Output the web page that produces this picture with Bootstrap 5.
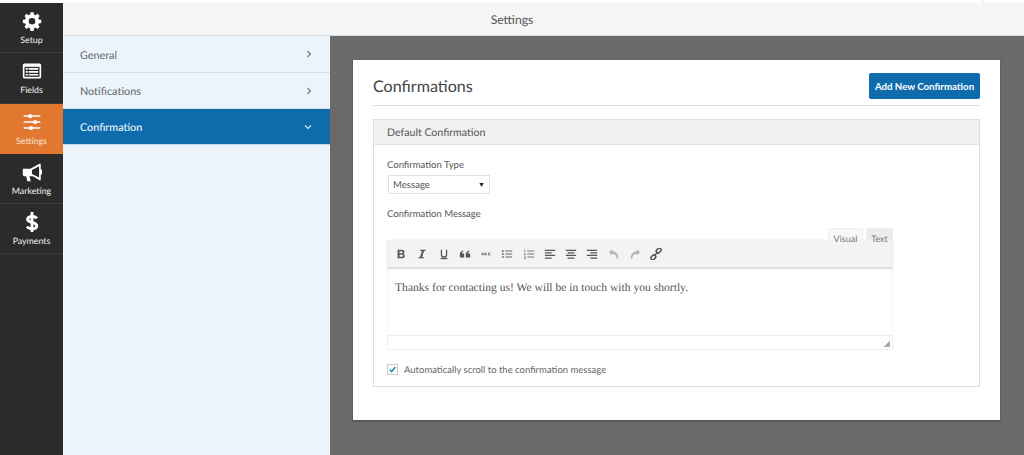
<!DOCTYPE html>
<html lang="en">
<head>
<meta charset="utf-8">
<title>Settings</title>
<link rel="stylesheet" href="https://cdn.jsdelivr.net/npm/bootstrap@5.3.0/dist/css/bootstrap.min.css">
<style>
html,body{height:455px;overflow:hidden;background:#fff;}
body{font-family:"Lato","Open Sans",sans-serif;color:#555;text-rendering:geometricPrecision;}
.strip{height:3px;background:#fff;display:flex;justify-content:flex-end;padding-right:41px;}
.strip-tick{width:1px;background:#ddd;}
.shell{height:452px;}
.rail{width:63px;background:#2b2b2b;flex:none;}
.rail-item{height:50.3px;color:#f2f2f2;font-size:8.800px;line-height:12px;border-bottom:1px solid #3a3a3a;padding-top:8px;}
.rail-item svg{display:block;margin-bottom:3px;height:20px;width:20px;}
.rail-on{background:#e27730;border-bottom-color:#e27730;}
.rail-on span{color:#fbe6d6;}
.topbar{height:33px;background:#f5f5f5;border-bottom:1px solid #ddd;font-size:12.200px;color:#555;padding:3px 63px 0 0;flex:none;}
.navcol{width:267px;background:#ebf3fb;flex:none;}
.navrow{height:36px;padding:0 18px 0 17px;font-size:10.800px;color:#666;border-bottom:1px solid #d5dfe8;}
.navrow span{padding-top:4px;}
.navrow:first-child{height:37px;}
.navrow:first-child span{padding-top:5px;}
.navrow-on{background:#0e6cad;color:#fff;border-bottom-color:#bcd5e8;}
.stage{background:#6a6a6a;padding:24px 24px 0 23px;min-width:0;}
.sheet{background:#fff;height:360px;padding:13px 20px 0;box-shadow:0 1px 2px rgba(0,0,0,.3);}
.sheet-head{height:33px;border-bottom:1px solid #ddd;}
.sheet-title{font-size:16.100px;font-weight:400;color:#444;margin:0;padding-top:1px;line-height:26px;}
.addbtn{background:#0e6cad;color:#fff;font-size:9.700px;font-weight:700;width:111px;height:26px;padding:0;border:0;border-radius:2px;}
.addbtn:hover{background:#0e6cad;color:#fff;}
.confbox{margin-top:13px;border:1px solid #ddd;height:268px;}
.confbox-head{height:25px;background:#f1f1f1;border-bottom:1px solid #e4e4e4;font-size:10.600px;line-height:27px;padding-left:13px;color:#555;}
.confbox-body{padding:12px 14px 0 13px;}
.fieldlabel{font-size:9.500px;height:14px;line-height:18px;color:#555;margin:0;display:block;}
.fieldlabel-gap{margin-top:12px;}
.typepick{width:102px;height:19px;margin:4px 0 0 1px;font-size:9.600px;line-height:19px;background:#fff;border:1px solid #e3e3e3;padding:1px 4px 0;color:#555;}
.typepick i{font-style:normal;font-size:7px;color:#222;}
.editor{width:506px;}
.tabsrow{height:12px;margin-top:8px;gap:3px;position:relative;z-index:1;}
.edtab{font-size:9px;line-height:19px;height:12px;color:#777;text-align:center;background:#f7f7f7;border:1px solid #eee;border-bottom:0;}
.edtab-v{width:35px;}
.edtab-b{width:27px;background:#ececec;}
.edbar{height:29px;background:#f3f3f3;border-bottom:2px solid #e0e0e0;box-shadow:0 0 1px #ccc;padding:1px 0 0 8px;gap:9.250px;}
.tbtn{width:12px;height:12px;flex:none;display:block;}
.edarea{height:66px;border-left:1px solid #f3f3f3;border-right:1px solid #f3f3f3;font-family:"Liberation Serif",serif;font-size:11.600px;padding:12px 7px;color:#555;line-height:14px;}
.edstat{height:15px;border:1px solid #eee;position:relative;}
.grip{position:absolute;right:2px;bottom:2px;width:6px;height:6px;background:linear-gradient(135deg,transparent 50%,#aaa 50%);}
.chkrow{margin-top:12px;gap:6px;font-size:9.500px;color:#666;line-height:13px;}
.chkrow span{padding-top:2px;}
.chkbox{width:11px;height:11px;border:1px solid #ccc;flex:none;background:#fff;display:block;}
</style>
</head>
<body>
<div class="strip"><div class="strip-tick"></div></div>
<div class="shell d-flex">
  <nav class="rail d-flex flex-column">
    <div class="rail-item d-flex flex-column align-items-center">
      <svg viewBox="0 0 24 24"><path fill="#fff" fill-rule="evenodd" d="M10 1h4l.6 3.100 1.900.8 2.700-1.800 2.700 2.800-1.800 2.600.8 1.900L24 11v4l-3.100.6-.8 1.900 1.800 2.600-2.700 2.800-2.700-1.800-1.900.8-.6 3.600h-4l-.6-3.600-1.900-.8-2.700 1.800-2.700-2.800 1.800-2.600-.8-1.900L0 15v-4l3.100-.6.800-1.900-1.800-2.600 2.700-2.800 2.700 1.800 1.900-.8zM12 8.500a4.300 4.300 0 1 0 0 8.600 4.300 4.300 0 0 0 0-8.600z" transform="translate(1 .5) scale(.92)"/></svg>
      <span>Setup</span>
    </div>
    <div class="rail-item d-flex flex-column align-items-center">
      <svg viewBox="0 0 24 24"><rect x="1" y="3" width="22" height="18" rx="2" fill="#fff"/><rect x="3" y="7" width="18" height="12" fill="#2b2b2b"/><path fill="#fff" d="M4.500 8.500H7v2H4.500zM8 8.500h11.500v2H8zM4.500 12H7v2H4.500zM8 12h11.500v2H8zM4.500 15.500H7v2H4.500zM8 15.500h11.500v2H8z"/></svg>
      <span>Fields</span>
    </div>
    <div class="rail-item rail-on d-flex flex-column align-items-center">
      <svg viewBox="0 0 24 24"><path fill="#fff" d="M2 4h20v1.800H2zM2 11.200h20v1.800H2zM2 18.400h20v1.800H2z"/><path fill="#fff" d="M8 2.700h3.600v4.400H8zM14 9.900h3.600v4.400H14zM9 17.100h3.600v4.400H9z"/></svg>
      <span>Settings</span>
    </div>
    <div class="rail-item d-flex flex-column align-items-center">
      <svg viewBox="0 0 24 24"><path fill="#fff" d="M1 8h9l11-6h1.500v7a3 3 0 0 1 0 6v7H21l-8-5H9l1.500 6h-4L5 17H3a2 2 0 0 1-2-2z"/><path fill="#2b2b2b" d="M12 9.500 20.500 5v13.500L12 14.500z"/></svg>
      <span>Marketing</span>
    </div>
    <div class="rail-item d-flex flex-column align-items-center">
      <svg viewBox="0 0 24 24"><path fill="none" stroke="#fff" stroke-width="3.600" d="M18 7.500c-1.500-1.500-3.500-2.200-6-2.200-3 0-5.300 1.300-5.300 3.500 0 5 11 2.500 11 7.700 0 2.300-2.500 3.600-5.700 3.600-2.500 0-4.600-.8-6.200-2.400"/><path fill="#fff" d="M10.300 0h3.400v24h-3.400z"/></svg>
      <span>Payments</span>
    </div>
  </nav>
  <div class="flex-grow-1 d-flex flex-column">
    <header class="topbar d-flex align-items-center justify-content-center">Settings</header>
    <div class="d-flex flex-grow-1">
      <aside class="navcol">
        <div class="navrow d-flex align-items-center justify-content-between"><span>General</span><svg width="6" height="8" viewBox="0 0 6 8"><path d="M1.500 1 4.500 4 1.500 7" fill="none" stroke="#777" stroke-width="1.100"/></svg></div>
        <div class="navrow d-flex align-items-center justify-content-between"><span>Notifications</span><svg width="6" height="8" viewBox="0 0 6 8"><path d="M1.500 1 4.500 4 1.500 7" fill="none" stroke="#777" stroke-width="1.100"/></svg></div>
        <div class="navrow navrow-on d-flex align-items-center justify-content-between"><span>Confirmation</span><svg width="8" height="6" viewBox="0 0 8 6"><path d="M1 1.500 4 4.500 7 1.500" fill="none" stroke="#d6e6f2" stroke-width="1.100"/></svg></div>
      </aside>
      <main class="stage flex-grow-1">
        <section class="sheet">
          <div class="sheet-head d-flex justify-content-between align-items-start">
            <h1 class="sheet-title">Confirmations</h1>
            <button type="button" class="btn addbtn">Add New Confirmation</button>
          </div>
          <div class="confbox">
            <div class="confbox-head">Default Confirmation</div>
            <div class="confbox-body">
              <label class="fieldlabel">Confirmation Type</label>
              <div class="typepick d-flex justify-content-between align-items-center"><span>Message</span><i>▼</i></div>
              <label class="fieldlabel fieldlabel-gap">Confirmation Message</label>
              <div class="editor">
                <div class="tabsrow d-flex justify-content-end"><span class="edtab edtab-v">Visual</span><span class="edtab edtab-b">Text</span></div>
                <div class="edbar d-flex align-items-center">
                  <svg class="tbtn" viewBox="0 0 14 14"><path fill="#555" fill-rule="evenodd" d="M3 2h5c2 0 3 1 3 2.600 0 1-.5 1.800-1.400 2.200 1.100.3 1.800 1.200 1.800 2.400C11.400 11 10.200 12 8 12H3zm2.300 1.800v2.300h2.300c.8 0 1.200-.5 1.200-1.200s-.4-1.100-1.200-1.100zm0 4v2.400H8c.9 0 1.300-.5 1.300-1.200s-.4-1.200-1.300-1.200z"/></svg>
                  <svg class="tbtn" viewBox="0 0 14 14"><path fill="#555" d="M5 2h6v1.500H9.300l-2.100 7H9V12H3v-1.500h1.800l2.100-7H5z"/></svg>
                  <svg class="tbtn" viewBox="0 0 14 14"><path fill="none" stroke="#555" stroke-width="1.500" d="M4 2v5.500c0 4 6 4 6 0V2"/><path fill="#555" d="M3 11.500h8V13H3z"/></svg>
                  <svg class="tbtn" viewBox="0 0 14 14"><path fill="#555" d="M1 11V8c0-2.500 1.200-4 3.500-5l.6 1C3.900 4.700 3.300 5.500 3.200 6.500H6V11zM8 11V8c0-2.500 1.200-4 3.500-5l.6 1c-1.200.7-1.800 1.500-1.900 2.500H13V11z"/></svg>
                  <svg class="tbtn" viewBox="-2 -2 18 18"><path fill="#555" d="M1 5h1.500L4 9H3l-.2-.7H1.300L1 9H0zm.4 2.500h1.200l-.6-1.600zM4.800 5h2.100c.8 0 1.200.4 1.200 1 0 .4-.2.700-.6.900.5.100.8.500.8 1 0 .7-.5 1.100-1.300 1.100H4.800zm1 .8v.8h.9c.3 0 .4-.2.400-.4s-.1-.4-.4-.4zm0 1.500v1h1c.3 0 .5-.2.500-.5s-.2-.5-.5-.5zM14 8.300c-.4.500-1 .8-1.700.8C11 9.100 10 8.200 10 7c0-1.200 1-2.100 2.300-2.100.7 0 1.300.3 1.700.8l-.7.5c-.2-.3-.6-.5-1-.5-.7 0-1.300.6-1.300 1.300s.6 1.300 1.300 1.300c.4 0 .8-.2 1-.5z"/></svg>
                  <svg class="tbtn" viewBox="0 0 14 14"><path fill="#666" d="M1 2.500h2.200v2H1zM1 6h2.200v2H1zM1 9.500h2.200v2H1zM5 3h8v1H5zM5 6.500h8v1H5zM5 10h8v1H5z"/></svg>
                  <svg class="tbtn" viewBox="0 0 14 14"><path fill="#777" d="M1.500 2h1.200v3h-1zM1 6.500h2.200v.8H2v.5h1.200v.7H1zM1 10h2.200v3H1v-.6h1.400v-.5h-.9v-.5h.9v-.7H1zM5 3h8v1H5zM5 6.500h8v1H5zM5 10h8v1H5z"/></svg>
                  <svg class="tbtn" viewBox="0 0 14 14"><path fill="#555" d="M1 2h12v1.400H1zM1 5h8v1.400H1zM1 8h12v1.400H1zM1 11h8v1.400H1z"/></svg>
                  <svg class="tbtn" viewBox="0 0 14 14"><path fill="#555" d="M1 2h12v1.400H1zM3 5h8v1.400H3zM1 8h12v1.400H1zM3 11h8v1.400H3z"/></svg>
                  <svg class="tbtn" viewBox="0 0 14 14"><path fill="#555" d="M1 2h12v1.400H1zM5 5h8v1.400H5zM1 8h12v1.400H1zM5 11h8v1.400H5z"/></svg>
                  <svg class="tbtn" viewBox="0 0 14 14"><path fill="#b4b4b4" d="M1 5 5 1.500v2.300C9 3.800 12 6.500 12 12.500h-1.800C10 9 8.500 6.800 5 6.800v2z"/></svg>
                  <svg class="tbtn" viewBox="0 0 14 14"><path fill="#b4b4b4" d="M13 5 9 1.500v2.300C5 3.800 2 6.500 2 12.500h1.800C4 9 5.500 6.800 9 6.800v2z"/></svg>
                  <svg class="tbtn" viewBox="0 0 14 14"><g fill="none" stroke="#555" stroke-width="1.800"><rect x="7" y="1" width="6.200" height="4.200" rx="2.100" transform="rotate(-45 10 3)"/><rect x=".8" y="8.800" width="6.200" height="4.200" rx="2.100" transform="rotate(-45 4 11)"/><path d="M5 9l4-4"/></g></svg>
                </div>
                <div class="edarea">Thanks for contacting us! We will be in touch with you shortly.</div>
                <div class="edstat"><span class="grip"></span></div>
              </div>
              <div class="chkrow d-flex align-items-center">
                <svg class="chkbox" viewBox="0 0 11 11"><path d="M2 5.500 4.500 8 9 2.500" fill="none" stroke="#1e8cbe" stroke-width="1.800"/></svg>
                <span>Automatically scroll to the confirmation message</span>
              </div>
            </div>
          </div>
        </section>
      </main>
    </div>
  </div>
</div>
</body>
</html>
